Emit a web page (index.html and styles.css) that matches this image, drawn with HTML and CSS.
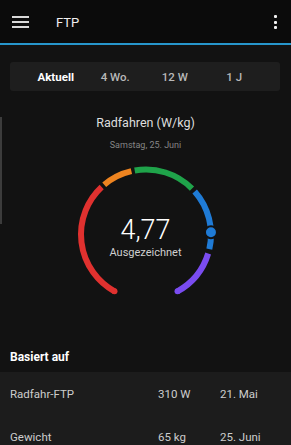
FILE: index.html
```html
<!DOCTYPE html>
<html lang="de">
<head>
<meta charset="utf-8">
<title>FTP</title>
<link rel="stylesheet" href="styles.css">
</head>
<body>
<div class="screen">
  <header class="appbar">
    <div class="menu"><span></span><span></span><span></span></div>
    <div class="title">FTP</div>
    <div class="more"><span></span><span></span><span></span></div>
  </header>
  <div class="accent"></div>

  <nav class="tabs">
    <div class="tab active">Aktuell</div>
    <div class="tab">4 Wo.</div>
    <div class="tab">12 W</div>
    <div class="tab">1 J</div>
  </nav>

  <div class="heading">Radfahren (W/kg)</div>
  <div class="date">Samstag, 25. Juni</div>

  <div class="gauge">
    <svg class="gauge-svg" width="150" height="140" viewBox="0 0 150 140">
      <g fill="none" stroke-width="6" stroke-linecap="butt">
        <path d="M43.49 131.35 A65 65 0 0 1 30.67 26.96" stroke="#e0312f"/>
        <path d="M33.22 24.71 A65 65 0 0 1 60.38 11.17" stroke="#ee8420"/>
        <path d="M63.71 10.49 A65 65 0 0 1 120.96 28.54" stroke="#1fa34a"/>
        <path d="M123.68 31.43 A65 65 0 0 1 138.33 89.12" stroke="#1f7bd6"/>
        <path d="M137.16 93.50 A65 65 0 0 1 106.51 131.35" stroke="#7a4cf0"/>
      </g>
      <circle cx="43.49" cy="131.35" r="3" fill="#e0312f"/>
      <circle cx="106.51" cy="131.35" r="3" fill="#7a4cf0"/>
      <circle cx="139.96" cy="72.23" r="6" fill="#1f7bd6" stroke="#121212" stroke-width="2"/>
    </svg>
    <div class="gauge-text">
      <div class="value">4,77</div>
      <div class="rating">Ausgezeichnet</div>
    </div>
  </div>

  <div class="section-title">Basiert auf</div>
  <div class="rows">
    <div class="row">
      <span class="label">Radfahr-FTP</span>
      <span class="val">310 W</span>
      <span class="when">21. Mai</span>
    </div>
    <div class="row">
      <span class="label">Gewicht</span>
      <span class="val">65 kg</span>
      <span class="when">25. Juni</span>
    </div>
  </div>

  <div class="edge"></div>
</div>
</body>
</html>
```

FILE: styles.css
```css
* { box-sizing: border-box; }
html, body { margin: 0; padding: 0; }
body {
  background: #121212;
  font-family: Roboto, "Liberation Sans", Arial, sans-serif;
  color: #dcdcdc;
  overflow: hidden;
}
.screen {
  position: relative;
  width: 291px;
  height: 445px;
  overflow: hidden;
}
.appbar {
  height: 43px;
  background: #0b0b0b;
  display: flex;
  align-items: center;
  padding: 0 14px 0 12px;
}
.menu {
  width: 17px;
  display: flex;
  flex-direction: column;
  gap: 3px;
  margin-top: 1px;
}
.menu span {
  display: block;
  height: 2px;
  background: #d8d8d8;
}
.title {
  margin-left: 27px;
  font-size: 13px;
  color: #f0f0f0;
  flex: 1;
  margin-top: 1px;
}
.more {
  display: flex;
  flex-direction: column;
  gap: 2.5px;
  margin-top: 1px;
}
.more span {
  width: 3px;
  height: 3px;
  background: #f2f2f2;
  border-radius: 1px;
}
.accent {
  height: 2px;
  background: #2796cc;
}
.tabs {
  margin: 17px 11px 0 10px;
  height: 29px;
  background: #1e1e1e;
  border-radius: 3px;
  display: grid;
  grid-template-columns: repeat(4, 1fr);
  padding: 0 16px;
  align-items: center;
}
.tab {
  text-align: center;
  font-size: 11.5px;
  font-weight: 500;
  color: #b8b8b8;
}
.tab.active {
  font-weight: 700;
  color: #ffffff;
}
.heading {
  margin-top: 24px;
  text-align: center;
  font-size: 12.5px;
  line-height: 16px;
  color: #dedede;
}
.date {
  margin-top: 8px;
  text-align: center;
  font-size: 9px;
  line-height: 12px;
  color: #858585;
}
.gauge {
  margin-top: 9px;
  display: grid;
  justify-content: center;
}
.gauge-svg, .gauge-text {
  grid-area: 1 / 1;
}
.gauge-svg { display: block; }
.gauge-text {
  padding-top: 55px;
  display: flex;
  flex-direction: column;
  align-items: center;
}
.value {
  font-size: 27px;
  line-height: 30px;
  color: #ffffff;
  font-weight: 300;
}
.rating {
  margin-top: 1px;
  font-size: 11px;
  line-height: 14px;
  color: #cfcfcf;
}
.section-title {
  margin-top: 42px;
  height: 30px;
  line-height: 30px;
  padding-left: 10px;
  font-size: 12px;
  font-weight: 700;
  color: #ffffff;
}
.rows {
  background: #1c1c1c;
}
.row {
  height: 43px;
  display: grid;
  grid-template-columns: 148px 62px 1fr;
  align-items: center;
  padding-left: 10px;
  font-size: 11.5px;
  color: #cdcdcd;
}
.edge {
  position: absolute;
  left: 0;
  top: 117px;
  width: 2px;
  height: 107px;
  background: #3c3c3c;
}
```
